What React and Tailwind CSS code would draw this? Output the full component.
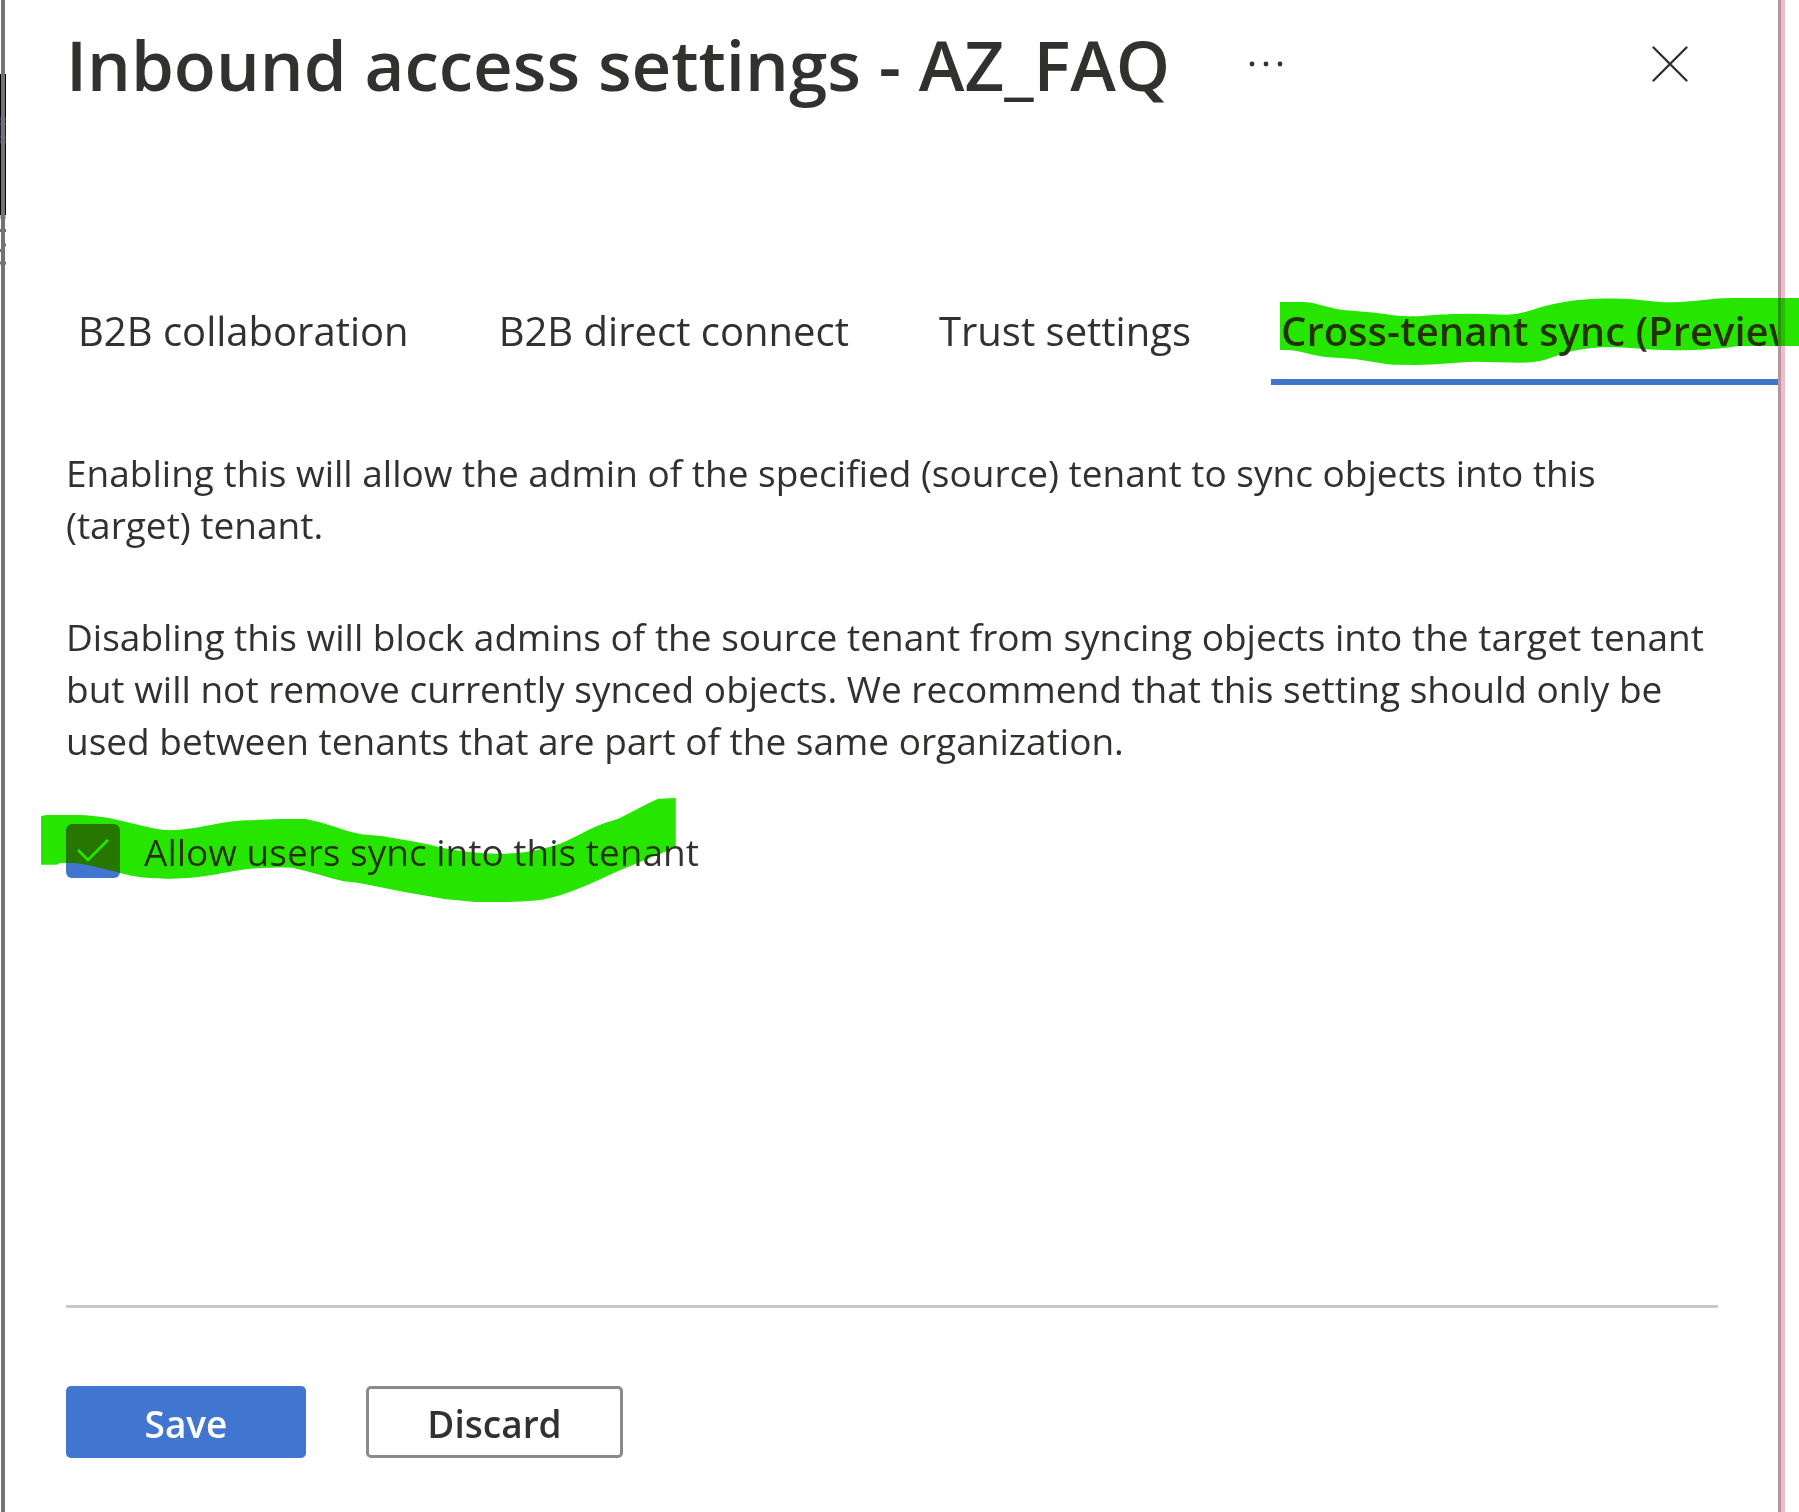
import React from "react";

const tabs = ["B2B collaboration", "B2B direct connect", "Trust settings"];

function TabHighlight() {
  return (
    <svg
      aria-hidden="true"
      viewBox="0 0 1568 420"
      preserveAspectRatio="none"
      className="pointer-events-none absolute top-[270px] right-0 h-[140px] w-[559px] mix-blend-darken"
    >
      <path
        fill="#26e600"
        d="M112 96L170 96C215 96 235 112 290 120L380 128C420 133 440 139 490 139C540 135 580 131 660 131L750 134C800 133 830 112 890 100C960 85 1010 85 1070 86C1130 88 1160 97 1215 97C1280 95 1320 84 1380 84L1568 84L1568 228L1400 228C1360 235 1300 241 1215 241C1140 240 1090 231 1030 231C960 234 920 244 870 264C840 275 820 278 790 278L660 275C600 277 560 284 490 285L430 284C390 281 360 272 320 267L240 261C200 256 170 241 130 240L112 240Z"
      />
    </svg>
  );
}

function CheckboxHighlight() {
  return (
    <svg
      aria-hidden="true"
      viewBox="0 0 1568 420"
      preserveAspectRatio="none"
      className="pointer-events-none absolute -top-11 -left-[46px] h-[140px] w-[700px] max-w-none mix-blend-darken"
    >
      <path
        fill="#26e600"
        d="M47 108L60 105L130 105C180 107 210 116 240 127C280 140 310 150 335 151C400 149 440 125 510 121C560 117 590 117 640 117C690 130 730 155 765 163L810 168C850 178 890 185 920 195C970 212 1020 222 1080 221C1140 220 1180 204 1210 191C1240 175 1280 142 1310 129L1340 116C1370 98 1400 72 1430 56L1469 54L1469 200C1440 220 1420 228 1400 240L1340 273C1310 290 1280 313 1250 326C1210 347 1180 361 1130 364L1090 366L1020 366L950 357C920 350 880 340 850 333L760 309L725 304C690 292 650 275 610 263C570 261 530 263 490 271C450 280 400 296 340 296C270 296 240 285 215 275C180 265 150 252 120 249L90 249L82 254L47 254Z"
      />
    </svg>
  );
}

function LeftEdge() {
  return (
    <svg aria-hidden="true" width="6" height="280" className="absolute top-0 left-0">
      <rect y="74" width="6" height="141" fill="#000" />
      <rect y="117" width="6" height="27" fill="#1c1930" />
      <path d="M0 119h6M0 124h6M0 137h6M0 142h6" stroke="#4c4777" />
      <rect y="215" width="6" height="4" fill="#bdbdbd" />
      <path d="M0 230.5h6M3 245h3M0 250.5h3M0 263h6" stroke="#4f8263" strokeWidth="3" />
    </svg>
  );
}

export default function App() {
  return (
    <div className="relative flex min-h-screen overflow-hidden bg-white font-['Open_Sans',sans-serif] text-[37px] leading-[52px] text-[#323130]">
      <div aria-hidden="true" className="relative w-[6px] shrink-0">
        <LeftEdge />
        <div className="absolute inset-y-0 left-px w-1 bg-[#737373]" />
      </div>

      <main className="flex min-w-0 flex-1 flex-col overflow-hidden">
        <header className="flex items-center pt-[17px] pr-[90px] pl-[60px]">
          <h1 className="text-[69px] leading-[94px] font-semibold whitespace-nowrap">
            Inbound access settings - AZ_FAQ
          </h1>
          <button type="button" aria-label="More options" className="ml-[78px]">
            <svg width="36" height="36" viewBox="0 0 36 36" fill="#323130">
              <circle cx="4" cy="18" r="2.4" />
              <circle cx="18" cy="18" r="2.4" />
              <circle cx="32" cy="18" r="2.4" />
            </svg>
          </button>
          <button type="button" aria-label="Close" className="ml-auto">
            <svg width="36" height="36" viewBox="0 0 36 36" fill="none" stroke="#323130" strokeWidth="2.4" strokeLinecap="round">
              <path d="M1.5 1.5L34.5 34.5M34.5 1.5L1.5 34.5" />
            </svg>
          </button>
        </header>

        <div role="tablist" className="mt-[194px] flex h-20 shrink-0 gap-[70px] pl-[62px] text-[40px] whitespace-nowrap">
          {tabs.map((t) => (
            <button key={t} type="button" role="tab" aria-selected="false" className="flex shrink-0 px-[10px]">
              {t}
            </button>
          ))}
          <button type="button" role="tab" aria-selected="true" className="flex shrink-0 border-b-6 border-[#4076c8] px-[10px] font-semibold">
            Cross-tenant sync (Preview)
          </button>
        </div>

        <section className="flex flex-1 flex-col pr-[60px] pl-[60px]">
          <p className="mt-[62px]">
            Enabling this will allow the admin of the specified (source) tenant to sync objects into this
            (target) tenant.
          </p>
          <p className="mt-[60px]">
            Disabling this will block admins of the source tenant from syncing objects into the target tenant
            but will not remove currently synced objects. We recommend that this setting should only be
            used between tenants that are part of the same organization.
          </p>
          <div className="relative mt-[57px] flex items-center gap-6">
            <span className="relative size-[54px] shrink-0">
              <input
                id="allow-sync"
                type="checkbox"
                defaultChecked
                className="block size-[54px] appearance-none rounded-[6px] bg-[#4076d0]"
              />
              <svg viewBox="0 0 54 54" fill="none" stroke="white" strokeWidth="2.6" className="pointer-events-none absolute inset-0">
                <path d="M12 26L22 36L42 16" />
              </svg>
            </span>
            <label htmlFor="allow-sync" className="pt-0.5">Allow users sync into this tenant</label>
            <CheckboxHighlight />
          </div>
        </section>

        <footer className="mr-[60px] ml-[60px] flex gap-[60px] border-t-3 border-[#c8c9c8] pt-[78px] pb-[54px] font-semibold">
          <button type="button" className="h-[72px] w-[240px] rounded-[5px] bg-[#4076d0] pt-1 text-white">
            Save
          </button>
          <button type="button" className="h-[72px] w-[257px] rounded-[5px] border-3 border-[#8a8a8a] pt-1">
            Discard
          </button>
        </footer>
      </main>

      <div aria-hidden="true" className="mr-[14px] w-[7px] shrink-0 border-l-3 border-[#b8959f] bg-[#f0bccc]" />
      <TabHighlight />
    </div>
  );
}
